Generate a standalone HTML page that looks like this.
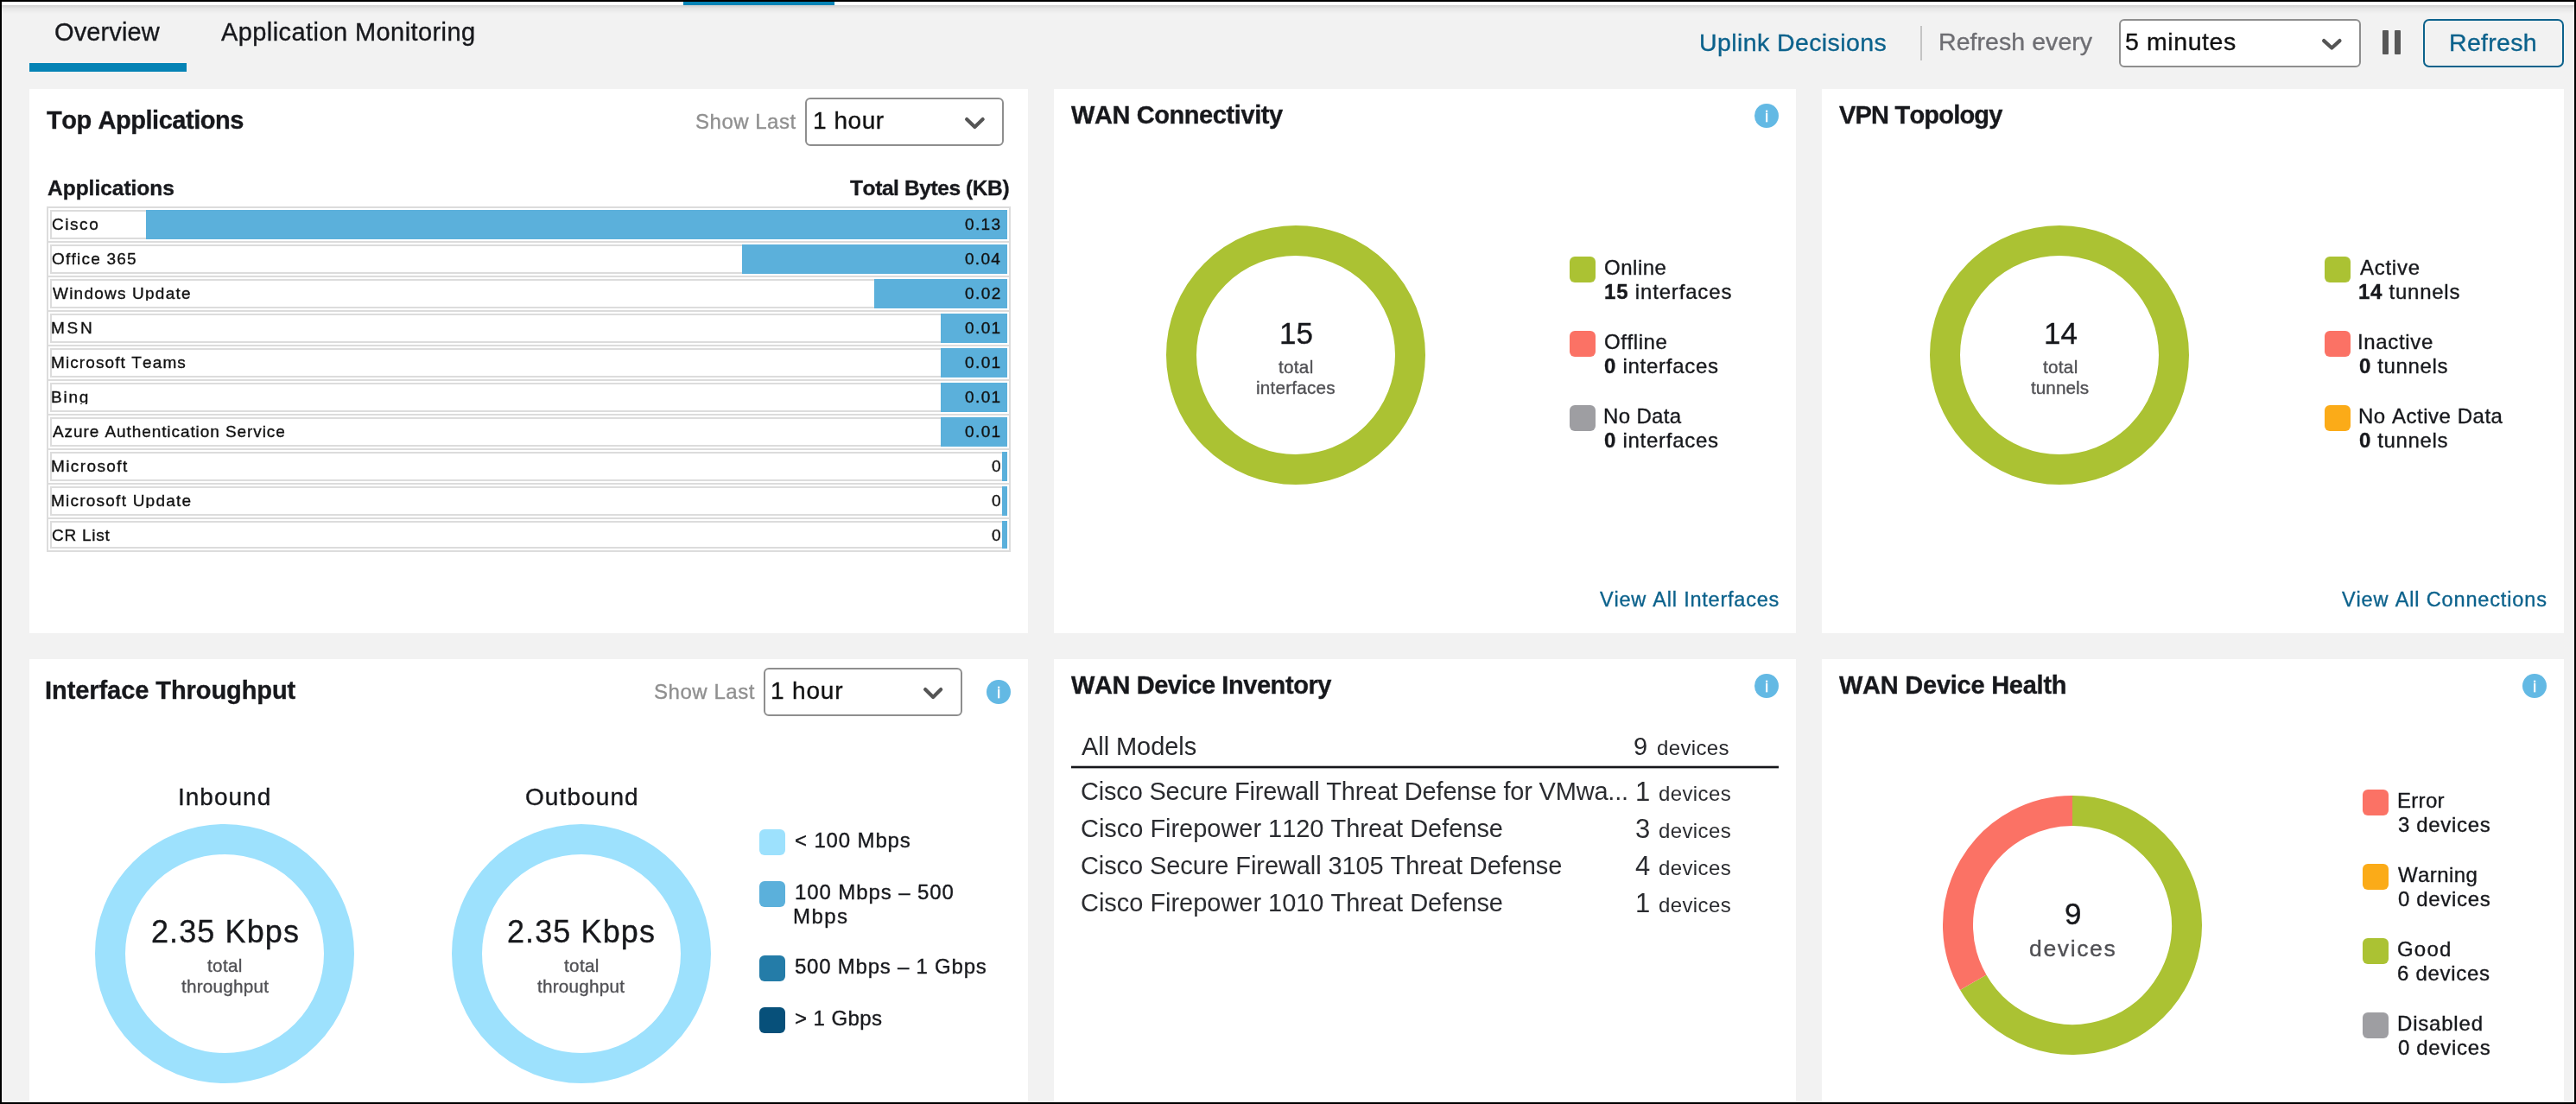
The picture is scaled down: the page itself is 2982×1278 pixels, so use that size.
<!DOCTYPE html>
<html lang="en">
<head>
<meta charset="utf-8">
<title>SD-WAN Summary - Overview</title>
<style>
html,body{margin:0;padding:0}
body{width:2982px;height:1278px;background:#f2f2f2;overflow:hidden;position:relative;font-family:"Liberation Sans",sans-serif}
#page{position:absolute;left:0;top:0;width:2982px;height:1278px;overflow:hidden;background:#f2f2f2}
#page div{position:absolute;box-sizing:border-box}
#page svg{display:block;overflow:visible}
.t{line-height:1;white-space:nowrap;font-weight:400;font-kerning:none;will-change:transform;-webkit-text-stroke:0.35px currentColor}
.t b{font-weight:700}
.ic{-webkit-text-stroke:0.5px #fff}
.thin{-webkit-text-stroke:0}
</style>
</head>
<body>
<div id="page">
<div style="left:0px;top:2px;width:2982px;height:4px;background:#fff"></div>
<div style="left:791px;top:2px;width:175px;height:4px;background:#0583b5"></div>
<div style="left:0px;top:6px;width:2982px;height:10px;background:linear-gradient(#cfcfcf,#e6e6e6 40%,#f2f2f2)"></div>
<div class="t " style="left:63.03px;top:23.00px;font-size:29px;color:#17181c;letter-spacing:0.12px;">Overview</div>
<div class="t " style="left:255.74px;top:23.00px;font-size:29px;color:#17181c;letter-spacing:0.42px;">Application Monitoring</div>
<div style="left:34px;top:73px;width:182px;height:10px;background:#0583b5"></div>
<div class="t " style="left:1967.10px;top:35.00px;font-size:28.5px;color:#0c628c;letter-spacing:0.4px;">Uplink Decisions</div>
<div style="left:2223px;top:30px;width:2px;height:40px;background:#c4c4c4"></div>
<div class="t " style="left:2243.91px;top:34.00px;font-size:28.5px;color:#6e6e73;letter-spacing:0.06px;">Refresh every</div>
<div style="left:2453px;top:22px;width:280px;height:56px;background:#fff;border:2px solid #8e8e8e;border-radius:6px"></div>
<div class="t " style="left:2460.36px;top:34.00px;font-size:28.5px;color:#111;letter-spacing:0.59px;">5 minutes</div>
<div style="left:2686px;top:42.7px;width:26.6px;height:17.2px;"><svg width="26.6" height="17.2" viewBox="-2 -2 26.6 17.2"><polyline points="2.1,2.1 11.3,10.575 20.5,2.1" fill="none" stroke="#555" stroke-width="4.2" stroke-linecap="round" stroke-linejoin="round"/></svg></div>
<div style="left:2758px;top:35px;width:7px;height:28px;background:#575757;border-radius:1px"></div>
<div style="left:2772px;top:35px;width:7px;height:28px;background:#575757;border-radius:1px"></div>
<div style="left:2805px;top:22px;width:163px;height:56px;border:2px solid #0c628c;border-radius:7px"></div>
<div class="t " style="left:2835.46px;top:35.00px;font-size:28.5px;color:#0c628c;letter-spacing:0.32px;">Refresh</div>
<div style="left:34px;top:103px;width:1156px;height:630px;background:#fff"></div>
<div style="left:1220px;top:103px;width:859px;height:630px;background:#fff"></div>
<div style="left:2109px;top:103px;width:859px;height:630px;background:#fff"></div>
<div style="left:34px;top:763px;width:1156px;height:520px;background:#fff"></div>
<div style="left:1220px;top:763px;width:859px;height:520px;background:#fff"></div>
<div style="left:2109px;top:763px;width:859px;height:520px;background:#fff"></div>
<div class="t " style="left:53.77px;top:125.00px;font-size:29px;color:#17181c;letter-spacing:-0.45px;"><b>Top Applications</b></div>
<div class="t " style="left:804.91px;top:129.00px;font-size:24px;color:#8f8f8f;letter-spacing:0.51px;">Show Last</div>
<div style="left:932px;top:113px;width:230px;height:56px;background:#fff;border:2px solid #8e8e8e;border-radius:6px"></div>
<div class="t " style="left:940.87px;top:126.00px;font-size:28px;color:#111;letter-spacing:0.54px;">1 hour</div>
<div style="left:1114.6px;top:133.7px;width:26.8px;height:17.6px;"><svg width="26.8" height="17.6" viewBox="-2 -2 26.8 17.6"><polyline points="2.1,2.1 11.4,10.975 20.7,2.1" fill="none" stroke="#555" stroke-width="4.2" stroke-linecap="round" stroke-linejoin="round"/></svg></div>
<div class="t " style="left:55.29px;top:206.00px;font-size:24.5px;color:#17181c;letter-spacing:-0.01px;"><b>Applications</b></div>
<div class="t " style="left:983.55px;top:206.00px;font-size:24.5px;color:#17181c;letter-spacing:-0.4px;"><b>Total Bytes (KB)</b></div>
<div style="left:54px;top:239px;width:1116px;height:400px;border:2px solid #dcdcdc;box-sizing:border-box"></div>
<div style="left:58px;top:243px;width:1108px;height:34px;border:2px solid #dcdcdc;box-sizing:border-box"></div>
<div style="left:169px;top:243px;width:997px;height:34px;background:#5bb0db"></div>
<div class="t " style="left:59.64px;top:250.00px;font-size:19px;color:#111;letter-spacing:1.56px;height:17.60px;overflow:hidden;">Cisco</div>
<div class="t " style="left:1117.35px;top:250.00px;font-size:19px;color:#111;letter-spacing:1.37px;">0.13</div>
<div style="left:56px;top:279px;width:1112px;height:2px;background:#dcdcdc"></div>
<div style="left:58px;top:283px;width:1108px;height:34px;border:2px solid #dcdcdc;box-sizing:border-box"></div>
<div style="left:859px;top:283px;width:307px;height:34px;background:#5bb0db"></div>
<div class="t " style="left:59.70px;top:290.00px;font-size:19px;color:#111;letter-spacing:1.23px;height:17.60px;overflow:hidden;">Office 365</div>
<div class="t " style="left:1117.37px;top:290.00px;font-size:19px;color:#111;letter-spacing:1.27px;">0.04</div>
<div style="left:56px;top:319px;width:1112px;height:2px;background:#dcdcdc"></div>
<div style="left:58px;top:323px;width:1108px;height:34px;border:2px solid #dcdcdc;box-sizing:border-box"></div>
<div style="left:1012px;top:323px;width:154px;height:34px;background:#5bb0db"></div>
<div class="t " style="left:60.52px;top:330.00px;font-size:19px;color:#111;letter-spacing:1.22px;height:17.60px;overflow:hidden;">Windows Update</div>
<div class="t " style="left:1117.35px;top:330.00px;font-size:19px;color:#111;letter-spacing:1.41px;">0.02</div>
<div style="left:56px;top:359px;width:1112px;height:2px;background:#dcdcdc"></div>
<div style="left:58px;top:363px;width:1108px;height:34px;border:2px solid #dcdcdc;box-sizing:border-box"></div>
<div style="left:1089px;top:363px;width:77px;height:34px;background:#5bb0db"></div>
<div class="t " style="left:59.04px;top:370.00px;font-size:19px;color:#111;letter-spacing:2.69px;height:17.60px;overflow:hidden;">MSN</div>
<div class="t " style="left:1117.35px;top:370.00px;font-size:19px;color:#111;letter-spacing:1.4px;">0.01</div>
<div style="left:56px;top:399px;width:1112px;height:2px;background:#dcdcdc"></div>
<div style="left:58px;top:403px;width:1108px;height:34px;border:2px solid #dcdcdc;box-sizing:border-box"></div>
<div style="left:1089px;top:403px;width:77px;height:34px;background:#5bb0db"></div>
<div class="t " style="left:59.04px;top:410.00px;font-size:19px;color:#111;letter-spacing:1.1px;height:17.60px;overflow:hidden;">Microsoft Teams</div>
<div class="t " style="left:1117.35px;top:410.00px;font-size:19px;color:#111;letter-spacing:1.4px;">0.01</div>
<div style="left:56px;top:439px;width:1112px;height:2px;background:#dcdcdc"></div>
<div style="left:58px;top:443px;width:1108px;height:34px;border:2px solid #dcdcdc;box-sizing:border-box"></div>
<div style="left:1089px;top:443px;width:77px;height:34px;background:#5bb0db"></div>
<div class="t " style="left:59.04px;top:450.00px;font-size:19px;color:#111;letter-spacing:1.75px;height:17.60px;overflow:hidden;">Bing</div>
<div class="t " style="left:1117.35px;top:450.00px;font-size:19px;color:#111;letter-spacing:1.4px;">0.01</div>
<div style="left:56px;top:479px;width:1112px;height:2px;background:#dcdcdc"></div>
<div style="left:58px;top:483px;width:1108px;height:34px;border:2px solid #dcdcdc;box-sizing:border-box"></div>
<div style="left:1089px;top:483px;width:77px;height:34px;background:#5bb0db"></div>
<div class="t " style="left:60.56px;top:490.00px;font-size:19px;color:#111;letter-spacing:0.92px;height:17.60px;overflow:hidden;">Azure Authentication Service</div>
<div class="t " style="left:1117.35px;top:490.00px;font-size:19px;color:#111;letter-spacing:1.4px;">0.01</div>
<div style="left:56px;top:519px;width:1112px;height:2px;background:#dcdcdc"></div>
<div style="left:58px;top:523px;width:1108px;height:34px;border:2px solid #dcdcdc;box-sizing:border-box"></div>
<div style="left:1160px;top:523px;width:6px;height:34px;background:#5bb0db"></div>
<div class="t " style="left:59.04px;top:530.00px;font-size:19px;color:#111;letter-spacing:1.39px;height:17.60px;overflow:hidden;">Microsoft</div>
<div class="t " style="left:1148.48px;top:530.00px;font-size:19px;color:#111;">0</div>
<div style="left:56px;top:559px;width:1112px;height:2px;background:#dcdcdc"></div>
<div style="left:58px;top:563px;width:1108px;height:34px;border:2px solid #dcdcdc;box-sizing:border-box"></div>
<div style="left:1160px;top:563px;width:6px;height:34px;background:#5bb0db"></div>
<div class="t " style="left:59.04px;top:570.00px;font-size:19px;color:#111;letter-spacing:1.23px;height:17.60px;overflow:hidden;">Microsoft Update</div>
<div class="t " style="left:1148.48px;top:570.00px;font-size:19px;color:#111;">0</div>
<div style="left:56px;top:599px;width:1112px;height:2px;background:#dcdcdc"></div>
<div style="left:58px;top:603px;width:1108px;height:32px;border:2px solid #dcdcdc;box-sizing:border-box"></div>
<div style="left:1160px;top:603px;width:6px;height:32px;background:#5bb0db"></div>
<div class="t " style="left:59.64px;top:610.00px;font-size:19px;color:#111;letter-spacing:0.76px;height:17.60px;overflow:hidden;">CR List</div>
<div class="t " style="left:1148.48px;top:610.00px;font-size:19px;color:#111;">0</div>
<div class="t " style="left:1239.97px;top:119.00px;font-size:29px;color:#17181c;letter-spacing:-0.41px;"><b>WAN Connectivity</b></div>
<div style="left:2031px;top:120px;width:27.8px;height:27.8px;background:#63b9e4;border-radius:50%"></div>
<div class="t ic" style="left:2042.89px;top:125.00px;font-size:19px;color:#fff;">i</div>
<div style="left:1350px;top:261px;width:300px;height:300px;"><svg width="300" height="300" viewBox="-150 -150 300 300"><circle r="132.5" fill="none" stroke="#abc233" stroke-width="35"/></svg></div>
<div class="t " style="left:1481.34px;top:368.00px;font-size:35px;color:#17181c;">15</div>
<div class="t " style="left:1480.19px;top:415.01px;font-size:20.7px;color:#505054;letter-spacing:0.29px;">total</div>
<div class="t " style="left:1454.41px;top:439.01px;font-size:20.7px;color:#505054;letter-spacing:0.2px;">interfaces</div>
<div style="left:1817px;top:297px;width:30px;height:30px;background:#abc233;border-radius:6px"></div>
<div class="t " style="left:1857.16px;top:298.00px;font-size:24px;color:#17181c;letter-spacing:0.51px;">Online</div>
<div class="t " style="left:1856.79px;top:326.00px;font-size:24px;color:#17181c;letter-spacing:0.83px;"><b>15</b> interfaces</div>
<div style="left:1817px;top:383px;width:30px;height:30px;background:#fb7265;border-radius:6px"></div>
<div class="t " style="left:1857.16px;top:384.00px;font-size:24px;color:#17181c;letter-spacing:0.59px;">Offline</div>
<div class="t " style="left:1857.35px;top:412.00px;font-size:24px;color:#17181c;letter-spacing:0.72px;"><b>0</b> interfaces</div>
<div style="left:1817px;top:469px;width:30px;height:30px;background:#9e9ea2;border-radius:6px"></div>
<div class="t " style="left:1856.33px;top:470.00px;font-size:24px;color:#17181c;letter-spacing:0.35px;">No Data</div>
<div class="t " style="left:1857.35px;top:498.00px;font-size:24px;color:#17181c;letter-spacing:0.72px;"><b>0</b> interfaces</div>
<div class="t " style="left:1851.90px;top:683.00px;font-size:23.5px;color:#0c628c;letter-spacing:0.78px;">View All Interfaces</div>
<div class="t " style="left:2129.05px;top:119.00px;font-size:29px;color:#17181c;letter-spacing:-0.8px;"><b>VPN Topology</b></div>
<div style="left:2234px;top:261px;width:300px;height:300px;"><svg width="300" height="300" viewBox="-150 -150 300 300"><circle r="132.5" fill="none" stroke="#abc233" stroke-width="35"/></svg></div>
<div class="t " style="left:2365.61px;top:368.00px;font-size:35px;color:#17181c;">14</div>
<div class="t " style="left:2364.69px;top:415.01px;font-size:20.7px;color:#505054;letter-spacing:0.29px;">total</div>
<div class="t " style="left:2350.99px;top:439.01px;font-size:20.7px;color:#505054;letter-spacing:0.05px;">tunnels</div>
<div style="left:2691px;top:297px;width:30px;height:30px;background:#abc233;border-radius:6px"></div>
<div class="t " style="left:2731.55px;top:298.00px;font-size:24px;color:#17181c;letter-spacing:0.73px;">Active</div>
<div class="t " style="left:2730.09px;top:326.00px;font-size:24px;color:#17181c;letter-spacing:0.74px;"><b>14</b> tunnels</div>
<div style="left:2691px;top:383px;width:30px;height:30px;background:#fb7265;border-radius:6px"></div>
<div class="t " style="left:2729.39px;top:384.00px;font-size:24px;color:#17181c;letter-spacing:0.65px;">Inactive</div>
<div class="t " style="left:2730.65px;top:412.00px;font-size:24px;color:#17181c;letter-spacing:0.64px;"><b>0</b> tunnels</div>
<div style="left:2691px;top:469px;width:30px;height:30px;background:#fbab18;border-radius:6px"></div>
<div class="t " style="left:2729.63px;top:470.00px;font-size:24px;color:#17181c;letter-spacing:0.53px;">No Active Data</div>
<div class="t " style="left:2730.65px;top:498.00px;font-size:24px;color:#17181c;letter-spacing:0.64px;"><b>0</b> tunnels</div>
<div class="t " style="left:2711.40px;top:683.00px;font-size:23.5px;color:#0c628c;letter-spacing:0.85px;">View All Connections</div>
<div class="t " style="left:52.06px;top:785.00px;font-size:29px;color:#17181c;letter-spacing:-0.07px;"><b>Interface Throughput</b></div>
<div class="t " style="left:756.81px;top:789.00px;font-size:24px;color:#8f8f8f;letter-spacing:0.54px;">Show Last</div>
<div style="left:884px;top:773px;width:230px;height:56px;background:#fff;border:2px solid #8e8e8e;border-radius:6px"></div>
<div class="t " style="left:891.77px;top:786.00px;font-size:28px;color:#111;letter-spacing:0.82px;">1 hour</div>
<div style="left:1067.1px;top:793.7px;width:26.3px;height:17.6px;"><svg width="26.3" height="17.6" viewBox="-2 -2 26.3 17.6"><polyline points="2.1,2.1 11.15,10.975 20.2,2.1" fill="none" stroke="#555" stroke-width="4.2" stroke-linecap="round" stroke-linejoin="round"/></svg></div>
<div style="left:1142px;top:786.9px;width:27.8px;height:27.8px;background:#63b9e4;border-radius:50%"></div>
<div class="t ic" style="left:1153.89px;top:792.01px;font-size:19px;color:#fff;">i</div>
<div class="t " style="left:206.20px;top:909.00px;font-size:28px;color:#17181c;letter-spacing:1px;">Inbound</div>
<div style="left:110px;top:954px;width:300px;height:300px;"><svg width="300" height="300" viewBox="-150 -150 300 300"><circle r="132.5" fill="none" stroke="#9de1fd" stroke-width="35"/></svg></div>
<div class="t " style="left:174.68px;top:1061.00px;font-size:36px;color:#17181c;letter-spacing:1.1px;">2.35 Kbps</div>
<div class="t " style="left:239.99px;top:1108.01px;font-size:20.7px;color:#505054;letter-spacing:0.34px;">total</div>
<div class="t " style="left:209.75px;top:1132.01px;font-size:20.7px;color:#505054;letter-spacing:0.24px;">throughput</div>
<div class="t " style="left:607.83px;top:909.00px;font-size:28px;color:#17181c;letter-spacing:1.09px;">Outbound</div>
<div style="left:522.7px;top:954px;width:300px;height:300px;"><svg width="300" height="300" viewBox="-150 -150 300 300"><circle r="132.5" fill="none" stroke="#9de1fd" stroke-width="35"/></svg></div>
<div class="t " style="left:587.38px;top:1061.00px;font-size:36px;color:#17181c;letter-spacing:1.1px;">2.35 Kbps</div>
<div class="t " style="left:652.69px;top:1108.01px;font-size:20.7px;color:#505054;letter-spacing:0.34px;">total</div>
<div class="t " style="left:622.45px;top:1132.01px;font-size:20.7px;color:#505054;letter-spacing:0.24px;">throughput</div>
<div style="left:879px;top:960px;width:30px;height:30px;background:#9de1fd;border-radius:6px"></div>
<div style="left:879px;top:1020px;width:30px;height:30px;background:#5bb0db;border-radius:6px"></div>
<div style="left:879px;top:1106px;width:30px;height:30px;background:#247ca8;border-radius:6px"></div>
<div style="left:879px;top:1166px;width:30px;height:30px;background:#07507a;border-radius:6px"></div>
<div class="t " style="left:919.82px;top:961.00px;font-size:24px;color:#17181c;letter-spacing:0.86px;">&lt; 100 Mbps</div>
<div class="t " style="left:919.67px;top:1021.00px;font-size:24px;color:#17181c;letter-spacing:0.9px;">100 Mbps – 500</div>
<div class="t " style="left:918.33px;top:1049.00px;font-size:24px;color:#17181c;letter-spacing:1.45px;">Mbps</div>
<div class="t " style="left:920.04px;top:1107.00px;font-size:24px;color:#17181c;letter-spacing:0.77px;">500 Mbps – 1 Gbps</div>
<div class="t " style="left:919.82px;top:1167.00px;font-size:24px;color:#17181c;letter-spacing:0.43px;">&gt; 1 Gbps</div>
<div class="t " style="left:1240.17px;top:779.00px;font-size:29px;color:#17181c;letter-spacing:-0.42px;"><b>WAN Device Inventory</b></div>
<div style="left:2031px;top:780px;width:27.8px;height:27.8px;background:#63b9e4;border-radius:50%"></div>
<div class="t ic" style="left:2042.89px;top:785.00px;font-size:19px;color:#fff;">i</div>
<div class="t thin" style="left:1251.94px;top:850.00px;font-size:29px;color:#26272b;letter-spacing:-0.07px;">All Models</div>
<div class="t thin" style="left:1891.34px;top:850.00px;font-size:29px;color:#26272b;">9</div>
<div class="t thin" style="left:1917.89px;top:854.00px;font-size:24px;color:#26272b;letter-spacing:0.35px;">devices</div>
<div style="left:1240px;top:886px;width:819px;height:4px;background:linear-gradient(rgba(21,22,26,.3) 0 25%,#15161a 25% 75%,rgba(21,22,26,.35) 75%)"></div>
<div class="t thin" style="left:1251.33px;top:902.00px;font-size:29px;color:#2b2c30;letter-spacing:-0.19px;">Cisco Secure Firewall Threat Defense for VMwa...</div>
<div class="t thin" style="left:1892.70px;top:901.00px;font-size:31px;color:#2b2c30;">1</div>
<div class="t thin" style="left:1920.29px;top:907.00px;font-size:24px;color:#2b2c30;letter-spacing:0.38px;">devices</div>
<div class="t thin" style="left:1251.33px;top:945.00px;font-size:29px;color:#2b2c30;letter-spacing:-0.03px;">Cisco Firepower 1120 Threat Defense</div>
<div class="t thin" style="left:1892.70px;top:944.00px;font-size:31px;color:#2b2c30;">3</div>
<div class="t thin" style="left:1920.29px;top:950.00px;font-size:24px;color:#2b2c30;letter-spacing:0.38px;">devices</div>
<div class="t thin" style="left:1251.33px;top:988.00px;font-size:29px;color:#2b2c30;letter-spacing:-0.09px;">Cisco Secure Firewall 3105 Threat Defense</div>
<div class="t thin" style="left:1892.70px;top:987.00px;font-size:31px;color:#2b2c30;">4</div>
<div class="t thin" style="left:1920.29px;top:993.00px;font-size:24px;color:#2b2c30;letter-spacing:0.38px;">devices</div>
<div class="t thin" style="left:1251.33px;top:1031.00px;font-size:29px;color:#2b2c30;letter-spacing:-0.03px;">Cisco Firepower 1010 Threat Defense</div>
<div class="t thin" style="left:1892.70px;top:1030.00px;font-size:31px;color:#2b2c30;">1</div>
<div class="t thin" style="left:1920.29px;top:1036.00px;font-size:24px;color:#2b2c30;letter-spacing:0.38px;">devices</div>
<div class="t " style="left:2128.97px;top:779.01px;font-size:29px;color:#17181c;letter-spacing:-0.25px;"><b>WAN Device Health</b></div>
<div style="left:2920px;top:780px;width:27.8px;height:27.8px;background:#63b9e4;border-radius:50%"></div>
<div class="t ic" style="left:2931.89px;top:785.00px;font-size:19px;color:#fff;">i</div>
<div style="left:2248.8px;top:921px;width:300px;height:300px;"><svg width="300" height="300" viewBox="-150 -150 300 300"><path d="M0.000,-132.500 A132.5,132.5 0 1 1 -114.748,66.250" fill="none" stroke="#abc233" stroke-width="35"/><path d="M-114.748,66.250 A132.5,132.5 0 0 1 -0.000,-132.500" fill="none" stroke="#fb7265" stroke-width="35"/></svg></div>
<div class="t " style="left:2389.98px;top:1040.00px;font-size:35px;color:#17181c;">9</div>
<div class="t " style="left:2349.25px;top:1085.00px;font-size:26.5px;color:#505054;letter-spacing:1.65px;">devices</div>
<div style="left:2735px;top:914px;width:30px;height:30px;background:#fb7265;border-radius:6px"></div>
<div class="t " style="left:2774.53px;top:915.00px;font-size:24px;color:#17181c;letter-spacing:0.31px;">Error</div>
<div class="t " style="left:2775.59px;top:943.00px;font-size:24px;color:#17181c;letter-spacing:0.66px;">3 devices</div>
<div style="left:2735px;top:1000px;width:30px;height:30px;background:#fbab18;border-radius:6px"></div>
<div class="t " style="left:2776.39px;top:1001.00px;font-size:24px;color:#17181c;letter-spacing:0.41px;">Warning</div>
<div class="t " style="left:2775.56px;top:1029.00px;font-size:24px;color:#17181c;letter-spacing:0.66px;">0 devices</div>
<div style="left:2735px;top:1086px;width:30px;height:30px;background:#abc233;border-radius:6px"></div>
<div class="t " style="left:2775.29px;top:1087.00px;font-size:24px;color:#17181c;letter-spacing:1.18px;">Good</div>
<div class="t " style="left:2775.28px;top:1115.00px;font-size:24px;color:#17181c;letter-spacing:0.7px;">6 devices</div>
<div style="left:2735px;top:1172px;width:30px;height:30px;background:#9e9ea2;border-radius:6px"></div>
<div class="t " style="left:2774.53px;top:1173.00px;font-size:24px;color:#17181c;letter-spacing:0.8px;">Disabled</div>
<div class="t " style="left:2775.56px;top:1201.00px;font-size:24px;color:#17181c;letter-spacing:0.66px;">0 devices</div>
<div style="left:0px;top:0px;width:2982px;height:2px;background:#000"></div>
<div style="left:0px;top:0px;width:2px;height:1278px;background:#000"></div>
<div style="left:2980px;top:0px;width:2px;height:1278px;background:#000"></div>
<div style="left:0px;top:1275.6px;width:2982px;height:2.4px;background:#000"></div>
</div>
</body>
</html>
